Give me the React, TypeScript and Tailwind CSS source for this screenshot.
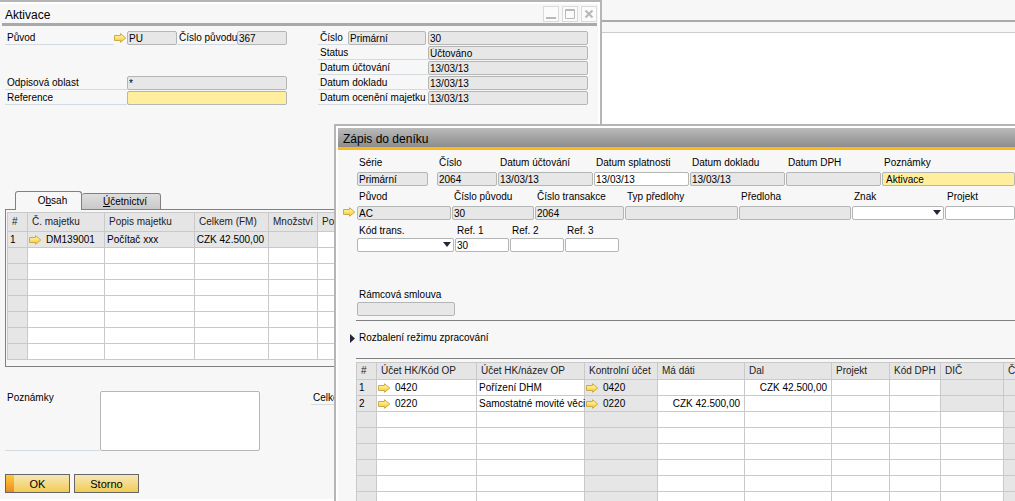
import { useId, type ReactNode } from "react"
import clsx from "clsx"

const assetColumns = [
  { title: "#", width: 20 },
  { title: "Č. majetku", width: 77 },
  { title: "Popis majetku", width: 90 },
  { title: "Celkem (FM)", width: 74 },
  { title: "Množství", width: 49 },
  { title: "Popis", width: 120 },
  { title: "", width: 155 },
]

const journalColumns = [
  { title: "#", width: 20 },
  { title: "Účet HK/Kód OP", width: 100 },
  { title: "Účet HK/název OP", width: 108 },
  { title: "Kontrolní účet", width: 73 },
  { title: "Má dáti", width: 87 },
  { title: "Dal", width: 87 },
  { title: "Projekt", width: 58 },
  { title: "Kód DPH", width: 51 },
  { title: "DIČ", width: 63 },
  { title: "Č", width: 90 },
]

const journalRows = [
  { account: "0420", name: "Pořízení DHM", debit: "", credit: "CZK 42.500,00" },
  { account: "0220", name: "Samostatné movité věci", debit: "CZK 42.500,00", credit: "" },
]

function LinkArrow() {
  return (
    <svg viewBox="0 0 13 10" className="h-[10px] w-[13px] shrink-0">
      <defs>
        <linearGradient id="arrow" x1="0" y1="0" x2="0" y2="1">
          <stop offset="0" stopColor="#fff9c4" />
          <stop offset="0.5" stopColor="#fbe36c" />
          <stop offset="1" stopColor="#f0c026" />
        </linearGradient>
      </defs>
      <path
        d="M0.5 2.5H6.5V0.7L11.8 5L6.5 9.3V7.5H0.5Z"
        fill="url(#arrow)"
        stroke="#cdaa48"
        strokeLinejoin="round"
      />
    </svg>
  )
}

type FieldProps = { value?: string; label: string; id?: string; tone?: "grey" | "white" | "yellow"; className?: string }

function Field({ value = "", label, id, tone = "grey", className }: FieldProps) {
  return (
    <input
      id={id}
      aria-label={id ? undefined : label}
      defaultValue={value}
      readOnly={tone === "grey"}
      className={clsx(
        "block h-[14px] min-w-0 rounded-[2px] border border-[#b4b6b6] leading-3 outline-none",
        tone === "grey" && "bg-[#e7e7e7] px-px",
        tone === "white" && "bg-white px-px",
        tone === "yellow" && "bg-[#ffee9e] px-[3px]",
        className,
      )}
    />
  )
}

function Label({ htmlFor, className, children }: { htmlFor?: string; className?: string; children: ReactNode }) {
  return (
    <label
      htmlFor={htmlFor}
      className={clsx(
        "block h-[14px] shrink-0 border-b border-[#d3dae0] pl-[2px] leading-[14px] whitespace-nowrap",
        className,
      )}
    >
      {children}
    </label>
  )
}

type StackedProps = FieldProps & { width: string; select?: boolean; tight?: boolean }

function StackedField({ label, width, select, tight, ...rest }: StackedProps) {
  const id = useId()
  return (
    <div className={clsx("flex min-w-0 flex-col", width)}>
      <label htmlFor={id} className={clsx("pl-[2px] leading-[14px] whitespace-nowrap", tight ? "h-[14px]" : "h-4")}>
        {label}
      </label>
      {select ? (
        <div className="relative">
          <select
            id={id}
            className="block h-[14px] w-full appearance-none rounded-[2px] border border-[#b4b6b6] bg-white outline-none"
          />
          <svg viewBox="0 0 8 5" className="pointer-events-none absolute top-1 right-[3px] h-[5px] w-2">
            <path d="M0 0H8L4 5Z" fill="#26263a" />
          </svg>
        </div>
      ) : (
        <Field label={label} id={id} {...rest} className="w-full" />
      )}
    </div>
  )
}

function InfoRow({ id, label, value }: { id: string; label: string; value: string }) {
  return (
    <div className="flex">
      <Label htmlFor={id} className="w-[110px]">
        {label}
      </Label>
      <Field id={id} label={label} value={value} className="w-[160px]" />
    </div>
  )
}

function WindowButton({ label, children }: { label: string; children: ReactNode }) {
  return (
    <button aria-label={label} className="grid size-4 place-items-center border border-[#dadada] bg-[#fbfbfb]">
      <svg viewBox="0 0 12 12" className="size-3" fill="none" stroke="#b9b9b9">
        {children}
      </svg>
    </button>
  )
}

function TableHead({ columns, height }: { columns: { title: string; width: number }[]; height: string }) {
  return (
    <>
      <colgroup>
        {columns.map((column, i) => (
          <col key={i} style={{ width: column.width }} />
        ))}
      </colgroup>
      <thead>
        <tr className={height}>
          {columns.map((column, i) => (
            <th
              key={i}
              className="border border-[#c9c9c9] bg-[#e5e5e5] p-0 pl-1 text-left font-normal whitespace-nowrap text-[#222]"
            >
              {column.title}
            </th>
          ))}
        </tr>
      </thead>
    </>
  )
}

type CellProps = { grey?: boolean; right?: boolean; children?: ReactNode }

function Cell({ grey, right, children }: CellProps) {
  return (
    <td
      className={clsx(
        "border border-[#c9c9c9] p-0 whitespace-nowrap",
        grey ? "bg-[#e6e6e6]" : "bg-white",
        right ? "pr-1 text-right" : "pl-[2px]",
      )}
    >
      {children}
    </td>
  )
}

function LinkCell({ grey, children }: CellProps) {
  return (
    <td className={clsx("border border-[#c9c9c9] p-0 pl-px whitespace-nowrap", grey ? "bg-[#e6e6e6]" : "bg-white")}>
      <span className="flex items-center gap-1">
        <LinkArrow />
        {children}
      </span>
    </td>
  )
}

function AssetWindow() {
  return (
    <section className="absolute inset-y-0 left-0 flex w-[602px] flex-col border-t-2 border-r-2 border-[#b4b6b6] bg-white pt-[2px]">
      <div className="mr-[2px] mb-[2px] flex flex-1 flex-col bg-[#f7f7f7]">
        <header className="mr-px ml-[2px] flex h-[22px] shrink-0 items-center border-b-3 border-[#a9a9a9] pl-[3px]">
          <h1 className="flex-1 pt-[2px] text-xs">Aktivace</h1>
          <div className="flex gap-[3px]">
            <WindowButton label="Minimalizovat">
              <path d="M1 10H11" strokeWidth="2" />
            </WindowButton>
            <WindowButton label="Maximalizovat">
              <path d="M1.5 1.5H10.5V10.5H1.5ZM1.5 2.5H10.5" />
            </WindowButton>
            <WindowButton label="Zavřít">
              <path d="M2.5 2.5L9.5 9.5M9.5 2.5L2.5 9.5" strokeWidth="2.2" />
            </WindowButton>
          </div>
        </header>

        <div className="flex gap-[31px] pt-[5px] pl-[5px]">
          <div className="flex w-[282px] flex-col gap-px">
            <div className="flex items-center">
              <Label htmlFor="origin" className="w-[109px]">
                Původ
              </Label>
              <LinkArrow />
              <Field id="origin" label="Původ" value="PU" className="w-[50px]" />
              <Label htmlFor="origin-no" className="w-[60px]">
                Číslo původu
              </Label>
              <Field id="origin-no" label="Číslo původu" value="367" className="w-[50px]" />
            </div>
            <div className="mt-[30px] flex">
              <Label htmlFor="area" className="w-[122px]">
                Odpisová oblast
              </Label>
              <Field id="area" label="Odpisová oblast" value="*" className="w-[160px]" />
            </div>
            <div className="flex">
              <Label htmlFor="reference" className="w-[122px]">
                Reference
              </Label>
              <Field id="reference" label="Reference" tone="yellow" className="w-[160px]" />
            </div>
          </div>

          <div className="flex flex-col gap-px">
            <div className="flex">
              <Label htmlFor="doc-no" className="w-[30px]">
                Číslo
              </Label>
              <Field label="Série" value="Primární" className="mr-[2px] w-[78px]" />
              <Field id="doc-no" label="Číslo" value="30" className="w-[160px]" />
            </div>
            <InfoRow id="status" label="Status" value="Účtováno" />
            <InfoRow id="posting-date" label="Datum účtování" value="13/03/13" />
            <InfoRow id="doc-date" label="Datum dokladu" value="13/03/13" />
            <InfoRow id="value-date" label="Datum ocenění majetku" value="13/03/13" />
          </div>
        </div>

        <div role="tablist" className="relative mt-[86px] -mb-px flex items-end pl-[15px]">
          <button
            role="tab"
            aria-selected="true"
            className="h-[19px] w-[67px] rounded-t-[3px] border border-b-0 border-[#808080] bg-[#f7f7f7] pl-2"
          >
            O<u>b</u>sah
          </button>
          <button
            role="tab"
            aria-selected="false"
            className="h-[17px] w-[79px] rounded-t-[3px] border border-l-0 border-[#808080] bg-linear-to-b from-[#dedede] to-[#c9c9c9] pl-2"
          >
            <u>Ú</u>četnictví
          </button>
        </div>
        <div className="ml-[5px] border border-r-0 border-[#808080] pt-[2px] pb-[6px] pl-px">
          <table className="w-[585px] table-fixed border-collapse">
            <TableHead columns={assetColumns} height="h-[19px]" />
            <tbody>
              <tr className="h-4">
                <Cell grey>1</Cell>
                <LinkCell grey>DM139001</LinkCell>
                <Cell grey>Počítač xxx</Cell>
                <Cell grey right>
                  CZK 42.500,00
                </Cell>
                <Cell grey />
                <Cell />
                <Cell />
              </tr>
              {Array.from({ length: 7 }, (_, row) => (
                <tr key={row} className="h-4">
                  {assetColumns.map((_, i) => (
                    <Cell key={i} grey={i === 0} />
                  ))}
                </tr>
              ))}
            </tbody>
          </table>
        </div>

        <div className="mt-6 flex pl-[5px]">
          <Label htmlFor="notes" className="h-[60px] w-[95px]">
            Poznámky
          </Label>
          <textarea
            id="notes"
            className="block h-[60px] w-[160px] resize-none rounded-[2px] border border-[#b4b6b6] bg-white"
          />
          <Label className="ml-[51px] w-[110px]">Celkem</Label>
        </div>

        <footer className="mt-[23px] flex gap-1 pl-[5px]">
          <button className="relative h-[19px] w-[65px] border border-[#666] bg-linear-to-b from-[#f6e7b3] to-[#f2cc50] text-[11px]">
            <span className="absolute inset-y-0 left-0 w-2 bg-linear-to-b from-[#fbcb3e] to-[#ee8a1c]" />
            OK
          </button>
          <button className="h-[19px] w-[65px] border border-[#666] bg-linear-to-b from-[#f6e7b3] to-[#f2cc50] text-[11px]">
            Storno
          </button>
        </footer>
      </div>
    </section>
  )
}

function JournalWindow() {
  return (
    <section className="absolute top-[124px] right-0 bottom-0 left-[334px] overflow-hidden border-t-2 border-l-2 border-[#b4b6b6] bg-white pt-[2px] pl-[2px]">
      <div className="h-full bg-[#f7f7f7]">
        <header className="flex h-[22px] items-center border-b-3 border-[#fcb814] bg-linear-to-b from-[#bababa] to-[#8d8d8d] pl-[5px]">
          <h2 className="pt-[2px] text-xs">Zápis do deníku</h2>
        </header>

        <div className="pt-[6px] pl-[19px]">
          <div className="flex gap-px">
            <StackedField label="Série" value="Primární" width="w-[71px] mr-2" />
            <StackedField label="Číslo" value="2064" width="w-[60px]" />
            <StackedField label="Datum účtování" value="13/03/13" width="w-[95px]" />
            <StackedField label="Datum splatnosti" value="13/03/13" tone="white" width="w-[95px]" />
            <StackedField label="Datum dokladu" value="13/03/13" width="w-[95px]" />
            <StackedField label="Datum DPH" width="w-[95px]" />
            <StackedField label="Poznámky" value="Aktivace" tone="yellow" width="flex-1" />
          </div>
          <div className="mt-1 -ml-[14px] flex gap-px">
            <div className="flex h-[30px] w-[13px] items-end pb-[3px]">
              <LinkArrow />
            </div>
            <StackedField label="Původ" value="AC" width="w-[94px]" />
            <StackedField label="Číslo původu" value="30" width="w-[82px]" />
            <StackedField label="Číslo transakce" value="2064" width="w-[89px]" />
            <StackedField label="Typ předlohy" width="w-[113px]" />
            <StackedField label="Předloha" width="w-[112px]" />
            <StackedField label="Znak" select width="w-[92px]" />
            <StackedField label="Projekt" tone="white" width="flex-1" />
          </div>
          <div className="mt-1 flex gap-px">
            <StackedField label="Kód trans." select tight width="w-[97px]" />
            <StackedField label="Ref. 1" value="30" tone="white" tight width="w-[54px]" />
            <StackedField label="Ref. 2" tone="white" tight width="w-[54px]" />
            <StackedField label="Ref. 3" tone="white" tight width="w-[54px]" />
          </div>
          <div className="mt-9 flex">
            <StackedField label="Rámcová smlouva" tight width="w-[98px]" />
          </div>
        </div>

        <div className="mt-1 ml-[18px] h-[39px] border-y border-[#808080]">
          <button className="-ml-[6px] flex h-[34px] items-center gap-1">
            <svg viewBox="0 0 5 9" className="h-[9px] w-[5px]">
              <path d="M0 0L5 4.5L0 9Z" fill="#26263a" />
            </svg>
            Rozbalení režimu zpracování
          </button>
        </div>

        <table className="mt-[3px] ml-[18px] w-[737px] table-fixed border-collapse">
          <TableHead columns={journalColumns} height="h-[17px]" />
          <tbody>
            {journalRows.map((row, i) => (
              <tr key={row.account} className="h-4">
                <Cell grey>{i + 1}</Cell>
                <LinkCell>{row.account}</LinkCell>
                <Cell>{row.name}</Cell>
                <LinkCell grey>{row.account}</LinkCell>
                <Cell right>{row.debit}</Cell>
                <Cell right>{row.credit}</Cell>
                <Cell />
                <Cell />
                <Cell grey />
                <Cell grey />
              </tr>
            ))}
            {Array.from({ length: 7 }, (_, row) => (
              <tr key={row} className="h-4">
                {journalColumns.map((_, i) => (
                  <Cell key={i} grey={i === 0 || i === 3 || i === 9} />
                ))}
              </tr>
            ))}
          </tbody>
        </table>
      </div>
    </section>
  )
}

export default function App() {
  return (
    <main className="relative h-screen overflow-hidden bg-white font-['Liberation_Sans',sans-serif] text-[10px] leading-3 text-black">
      <div className="h-[33px] border-b border-[#ccc] bg-[#f7f7f7] pt-5">
        <div className="h-[2px] bg-[#a9a9a9]" />
      </div>
      <AssetWindow />
      <JournalWindow />
    </main>
  )
}
